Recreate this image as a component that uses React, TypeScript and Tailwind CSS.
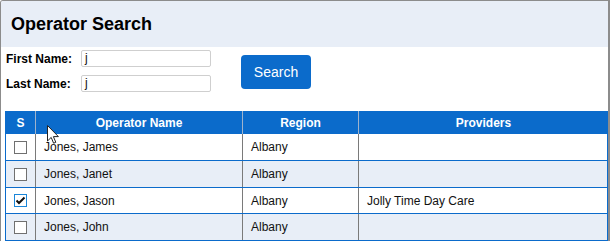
import React from "react";

// Rows shown in the results grid
const operators = [
  { name: "Jones, James", region: "Albany", provider: "", checked: false },
  { name: "Jones, Janet", region: "Albany", provider: "", checked: false },
  { name: "Jones, Jason", region: "Albany", provider: "Jolly Time Day Care", checked: true },
  { name: "Jones, John", region: "Albany", provider: "", checked: false },
];

const rowHeights = ["h-[27px]", "h-[27px]", "h-[26px]", "h-[27px]"];

const Checkbox = ({ checked }: { checked: boolean }) => (
  <span
    className={
      checked
        ? "w-[13px] h-[13px] border border-[#1a86d9] bg-white flex items-center justify-center"
        : "w-[13px] h-[13px] border border-[#707070] bg-white"
    }
  >
    {checked && (
      <svg width="11" height="11" viewBox="0 0 11 11">
        <path d="M1.5 5.5 L4 8 L9.5 2.5" fill="none" stroke="#111" strokeWidth="2" />
      </svg>
    )}
  </span>
);

export default function App() {
  return (
    <div className="relative w-[610px] h-[241px] overflow-hidden bg-white font-['Liberation_Sans',Arial,sans-serif] text-[#111]">
      <div className="w-[610px] h-[241px] border-l border-t border-r-2 border-[#8c8c8c] rounded-tl-[3px] overflow-hidden">
        <div className="h-[46px] bg-[#e8eef7] pl-[10px] flex items-center">
          <h1 className="text-[18px] font-bold text-black">Operator Search</h1>
        </div>

        <div className="flex pl-[5px] pt-[3px]">
          <div className="flex flex-col gap-[8px]">
            <div className="flex items-center h-[17px]">
              <label className="w-[75px] text-[12px] font-bold text-black">First Name:</label>
              <div className="w-[130px] h-[17px] border border-[#cfcfcf] rounded-[2px] bg-white pl-[3px] text-[12px] leading-[15px]">
                j
              </div>
            </div>
            <div className="flex items-center h-[17px]">
              <label className="w-[75px] text-[12px] font-bold text-black">Last Name:</label>
              <div className="w-[130px] h-[17px] border border-[#cfcfcf] rounded-[2px] bg-white pl-[3px] text-[12px] leading-[15px]">
                j
              </div>
            </div>
          </div>
          <button className="ml-[30px] mt-[5px] w-[70px] h-[34px] rounded-[4px] bg-[#0b6bcb] text-white text-[14px]">
            Search
          </button>
        </div>

        <div className="ml-[4px] mt-[19px] w-[603px] border-l border-r border-[#0b6bcb]">
          <div className="grid grid-cols-[30px_207px_116px_249px] h-[23px] bg-[#0b6bcb] text-white text-[12px] font-bold">
            <div className="border-r border-[#9fb3cc] flex items-center justify-center">S</div>
            <div className="border-r border-[#9fb3cc] flex items-center justify-center">Operator Name</div>
            <div className="border-r border-[#9fb3cc] flex items-center justify-center">Region</div>
            <div className="flex items-center justify-center">Providers</div>
          </div>
          {operators.map((op, idx) => (
            <div
              key={op.name}
              className={`grid grid-cols-[30px_207px_116px_249px] ${rowHeights[idx]} border-b border-[#0b6bcb] text-[12px] ${
                idx % 2 === 1 ? "bg-[#e8eef7]" : "bg-white"
              }`}
            >
              <div className="border-r border-[#7a7a7a] flex items-center justify-center">
                <Checkbox checked={op.checked} />
              </div>
              <div className="border-r border-[#7a7a7a] flex items-center pl-[8px]">{op.name}</div>
              <div className="border-r border-[#7a7a7a] flex items-center pl-[8px]">{op.region}</div>
              <div className="flex items-center pl-[8px]">{op.provider}</div>
            </div>
          ))}
        </div>
      </div>

      {/* mouse pointer */}
      <svg className="absolute left-[47px] top-[125px]" width="13" height="20" viewBox="0 0 13 20">
        <path
          d="M0.5 0.5 L0.5 16 L4.2 12.4 L6.6 18.2 L8.8 17.3 L6.4 11.6 L11.4 11.6 Z"
          fill="#fff"
          stroke="#222"
          strokeWidth="1"
        />
      </svg>
    </div>
  );
}
